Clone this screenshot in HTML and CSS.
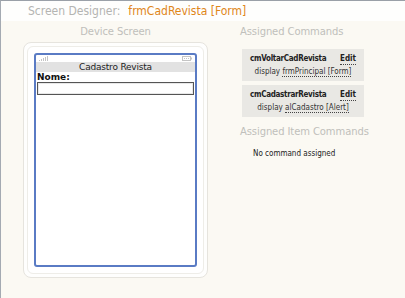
FILE: index.html
```html
<!DOCTYPE html>
<html>
<head>
<meta charset="utf-8">
<link rel="stylesheet" href="styles.css">
</head>
<body>
<div class="app">
  <div class="header">
    <span class="hlabel">Screen Designer:</span>
    <span class="hname">frmCadRevista [Form]</span>
  </div>
  <div class="main">
    <div class="left">
      <div class="sectitle center">Device Screen</div>
      <div class="frame">
        <div class="frame-inner">
          <div class="screen">
            <div class="status">
              <svg class="signal" width="10" height="5" viewBox="0 0 10 5"><rect x="0" y="4" width="1" height="1"/><rect x="2" y="3" width="1" height="2"/><rect x="4" y="2" width="1" height="3"/><rect x="6" y="1" width="1" height="4"/><rect x="8" y="0" width="1" height="5"/></svg>
              <svg class="battery" width="10" height="5" viewBox="0 0 10 5"><rect x="0.5" y="0.5" width="8" height="4" fill="none" stroke="#c4c4c4"/><rect x="2" y="2" width="1" height="1"/><rect x="4" y="2" width="1" height="1"/><rect x="6" y="2" width="1" height="1"/><rect x="9" y="1.5" width="1" height="2"/></svg>
            </div>
            <div class="titlebar">Cadastro Revista</div>
            <div class="label">Nome:</div>
            <div class="input"></div>
          </div>
        </div>
      </div>
    </div>
    <div class="right">
      <div class="sectitle">Assigned Commands</div>
      <div class="cmd">
        <div class="cmdrow"><span class="cmdname">cmVoltarCadRevista</span><span class="edit">Edit</span></div>
        <div class="cmdact">display <span class="link">frmPrincipal [Form]</span></div>
      </div>
      <div class="cmd">
        <div class="cmdrow"><span class="cmdname">cmCadastrarRevista</span><span class="edit">Edit</span></div>
        <div class="cmdact">display <span class="link">alCadastro [Alert]</span></div>
      </div>
      <div class="sectitle item">Assigned Item Commands</div>
      <div class="none">No command assigned</div>
    </div>
  </div>
</div>
</body>
</html>
```
FILE: styles.css
```css
html, body {
  margin: 0;
  padding: 0;
  width: 405px;
  height: 298px;
  overflow: hidden;
  background: #fcfbf7;
  font-family: "DejaVu Sans", "Liberation Sans", sans-serif;
}
.app {
  width: 404px;
  height: 297px;
  border-top: 1px solid #9aa0a8;
  border-left: 1px solid #a4aab2;
  display: flex;
  flex-direction: column;
}
.header {
  height: 20px;
  background: #fefefd;
  display: flex;
  align-items: baseline;
  padding-left: 27px;
  padding-top: 3px;
  box-sizing: border-box;
  font-family: "DejaVu Sans Condensed", "DejaVu Sans", sans-serif;
  font-size: 12px;
}
.hlabel { color: #b4b4b2; margin-right: 8px; }
.hname { color: #e0861a; }
.main {
  flex: 1;
  display: flex;
  background: #fbf9f3;
}
.left {
  width: 185px;
  padding-left: 22px;
  display: flex;
  flex-direction: column;
}
.sectitle {
  font-size: 10px;
  color: #c0bfbb;
  height: 21px;
  line-height: 22px;
  letter-spacing: -0.1px;
}
.center { text-align: center; }
.frame {
  width: 185px;
  height: 236px;
  box-sizing: border-box;
  border: 1px solid #e6e4de;
  border-radius: 8px;
  background: #fefefd;
  padding: 3px;
}
.frame-inner {
  height: 100%;
  box-sizing: border-box;
  border: 1px solid #eeede8;
  border-radius: 6px;
  background: #fff;
  padding: 6px 7px 8px 6px;
}
.screen {
  height: 214px;
  width: 163px;
  box-sizing: border-box;
  border: 2px solid #5a7bc4;
  border-radius: 3px;
  background: #fff;
  display: flex;
  flex-direction: column;
}
.status {
  height: 7px;
  display: flex;
  justify-content: space-between;
  align-items: center;
  padding: 0 3px;
  fill: #c4c4c4;
}
.titlebar {
  height: 10px;
  background: #e2e2e2;
  font-size: 9px;
  line-height: 10px;
  text-align: center;
  color: #222;
  letter-spacing: -0.2px;
}
.label {
  font-size: 9px;
  font-weight: bold;
  color: #111;
  padding-left: 1px;
  line-height: 10px;
}
.input {
  margin: 0 1px;
  height: 13px;
  box-sizing: border-box;
  border: 1px solid #555;
  box-shadow: inset 0 0 0 1px #e8e8e8;
}
.right {
  padding-left: 32px;
  display: flex;
  flex-direction: column;
}
.right .sectitle { height: 28px; }
.cmd {
  width: 122px;
  height: 32px;
  box-sizing: border-box;
  background: #e9e8e4;
  margin-left: 2px;
  margin-bottom: 4px;
  padding: 5px 8px 0 8px;
  font-family: "DejaVu Sans Condensed", "DejaVu Sans", sans-serif;
  font-size: 8px;
  color: #222;
}
.cmdrow {
  display: flex;
  justify-content: space-between;
  height: 13px;
}
.cmdname { font-weight: bold; letter-spacing: -0.3px; }
.edit { font-weight: bold; border-bottom: 1px dotted #444; height: 10px; }
.cmdact {
  text-align: center;
  color: #333;
}
.link { border-bottom: 1px dotted #444; }
.right .sectitle.item { height: 22px; }
.none {
  font-family: "DejaVu Sans Condensed", "DejaVu Sans", sans-serif;
  font-size: 8px;
  color: #222;
  padding-left: 13px;
  padding-top: 6px;
}
```
